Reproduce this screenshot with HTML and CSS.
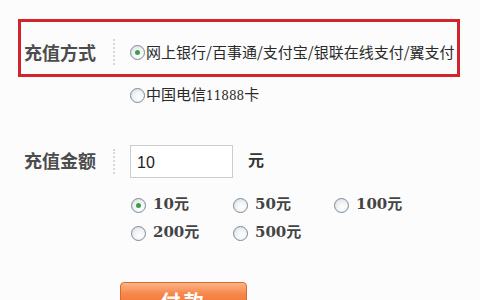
FILE: index.html
```html
<!DOCTYPE html>
<html lang="zh-CN">
<head>
<meta charset="utf-8">
<title>充值</title>
<link rel="stylesheet" href="styles.css">
</head>
<body>
<div class="page">
  <div class="method-box">
    <div class="label">充值方式</div>
    <div class="sep"></div>
    <div class="option">
      <span class="radio checked"></span><span class="opt-text">网上银行/百事通/支付宝/银联在线支付/翼支付</span>
    </div>
  </div>
  <div class="row option-row">
    <div class="label"></div>
    <div class="sep blank"></div>
    <div class="option">
      <span class="radio"></span><span class="opt-text">中国电信<span class="num">11888</span>卡</span>
    </div>
  </div>
  <div class="row amount-row">
    <div class="label label-up">充值金额</div>
    <div class="sep tall"></div>
    <div class="amount-field">
      <div class="input">10</div>
      <span class="unit">元</span>
    </div>
  </div>
  <div class="amounts">
    <div class="amt"><span class="radio checked"></span><span class="amt-text">10<span class="yuan">元</span></span></div>
    <div class="amt"><span class="radio"></span><span class="amt-text">50<span class="yuan">元</span></span></div>
    <div class="amt"><span class="radio"></span><span class="amt-text">100<span class="yuan">元</span></span></div>
    <div class="amt"><span class="radio"></span><span class="amt-text">200<span class="yuan">元</span></span></div>
    <div class="amt"><span class="radio"></span><span class="amt-text">500<span class="yuan">元</span></span></div>
  </div>
  <div class="btn-wrap">
    <button class="pay-btn">付款</button>
  </div>
</div>
</body>
</html>
```

FILE: styles.css
```css
html, body {
  margin: 0;
  padding: 0;
  background: #fcfcfc;
  overflow: hidden;
}
body {
  width: 480px;
  height: 300px;
  font-family: "Noto Sans CJK SC", "Noto Sans", sans-serif;
  color: #333;
}
.page {
  padding-top: 19px;
}
.method-box {
  margin-left: 18px;
  width: 442px;
  height: 58px;
  box-sizing: border-box;
  border: 3px solid #d3232b;
  padding-top: 8px;
  display: flex;
  align-items: center;
}
.row {
  margin-left: 21px;
  display: flex;
  align-items: center;
}
.label {
  width: 92px;
  box-sizing: border-box;
  padding-left: 3px;
  font-size: 18px;
  font-weight: bold;
  color: #4d4d4d;
  line-height: 20px;
}
.label-up {
  margin-top: -4px;
}
.sep {
  width: 0;
  height: 26px;
  border-left: 2px dotted #d8d8d8;
}
.sep.blank {
  border-left-color: transparent;
  height: 20px;
}
.sep.tall {
  height: 25px;
}
.option {
  margin-left: 15px;
  display: flex;
  align-items: center;
}
.opt-text {
  margin-left: 1px;
  font-size: 15px;
  line-height: 20px;
  color: #2a2a2a;
}
.num {
  font-family: "DejaVu Serif", serif;
  font-size: 12px;
}
.radio {
  display: inline-block;
  width: 15px;
  height: 15px;
  box-sizing: border-box;
  border-radius: 50%;
  border: 1px solid #7d8a98;
  background: radial-gradient(circle at 60% 65%, #ffffff 0%, #f1f3f5 45%, #d3d9df 100%);
  position: relative;
  flex: none;
}
.radio.checked::after {
  content: "";
  position: absolute;
  left: 4px;
  top: 4px;
  width: 5px;
  height: 5px;
  border-radius: 50%;
  background: #3f9c48;
}
.option-row {
  margin-top: 7px;
}
.amount-row {
  margin-top: 39px;
}
.amount-field {
  margin-left: 15px;
  display: flex;
  align-items: center;
}
.input {
  width: 103px;
  height: 33px;
  box-sizing: border-box;
  border: 1px solid #cdcdcd;
  background: #fff;
  padding-left: 6px;
  font-family: "Liberation Sans", sans-serif;
  font-size: 16px;
  line-height: 33px;
  color: #222;
}
.unit {
  margin-left: 15px;
  margin-top: -5px;
  font-size: 16px;
  font-weight: bold;
  color: #333;
}
.amounts {
  margin-top: 15px;
  margin-left: 130px;
  display: grid;
  grid-template-columns: 102px 101px auto;
  row-gap: 8px;
}
.amt {
  height: 20px;
  display: flex;
  align-items: center;
}
.amt .radio {
  margin-left: 1px;
  margin-top: 4px;
}
.amt-text {
  margin-left: 7px;
  font-family: "DejaVu Serif", serif;
  font-weight: bold;
  font-size: 15px;
  color: #444;
  line-height: 20px;
}
.yuan {
  font-family: "Noto Sans CJK SC", sans-serif;
  font-weight: bold;
  font-size: 15px;
}
.btn-wrap {
  margin-top: 41px;
  margin-left: 120px;
}
.pay-btn {
  display: block;
  width: 127px;
  height: 34px;
  border: 1px solid #d9692f;
  border-radius: 4px;
  background: linear-gradient(#fbb487 0%, #f7864a 35%, #f26a1f 100%);
  color: #fff;
  font-family: "Noto Sans CJK SC", sans-serif;
  font-size: 20px;
  font-weight: bold;
  line-height: 30px;
  padding: 0;
  padding-top: 4px;
  letter-spacing: 3px;
}
```
